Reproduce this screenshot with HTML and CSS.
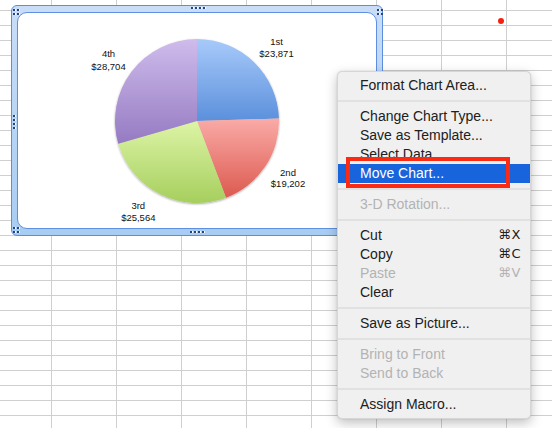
FILE: index.html
```html
<!DOCTYPE html>
<html>
<head>
<meta charset="utf-8">
<link rel="stylesheet" href="styles.css">
</head>
<body>
<div class="sheet">
  <div class="chart">
    <span class="handle corner h-tl"><i></i><i></i><i></i><i></i></span>
    <span class="handle corner h-tr"><i></i><i></i><i></i><i></i></span>
    <span class="handle corner h-bl"><i></i><i></i><i></i><i></i></span>
    <span class="handle row h-tm"><i></i><i></i><i></i><i></i></span>
    <span class="handle row h-bm"><i></i><i></i><i></i><i></i></span>
    <span class="handle col h-lm"><i></i><i></i><i></i><i></i></span>
    <div class="plot">
      <svg class="pie" viewBox="18 13 358 215" width="358" height="215">
        <defs>
          <linearGradient id="gBlue" x1="0" y1="0" x2="0" y2="1">
            <stop offset="0" stop-color="#a8cafa"/>
            <stop offset="1" stop-color="#5b90dc"/>
          </linearGradient>
          <linearGradient id="gRed" x1="0" y1="0" x2="0" y2="1">
            <stop offset="0" stop-color="#faaba7"/>
            <stop offset="1" stop-color="#dc5a50"/>
          </linearGradient>
          <linearGradient id="gGreen" x1="0" y1="0" x2="0" y2="1">
            <stop offset="0" stop-color="#ddf4a6"/>
            <stop offset="1" stop-color="#a6cf5e"/>
          </linearGradient>
          <linearGradient id="gPurple" x1="0" y1="0" x2="0" y2="1">
            <stop offset="0" stop-color="#cfbcec"/>
            <stop offset="1" stop-color="#957ac2"/>
          </linearGradient>
          <filter id="shadow" x="-10%" y="-10%" width="120%" height="120%">
            <feDropShadow dx="0" dy="1" stdDeviation="1" flood-color="#000" flood-opacity="0.35"/>
          </filter>
        </defs>
        <g filter="url(#shadow)">
          <path d="M197,121 L197,39 A82,82 0 0 1 278.96,118.54 Z" fill="url(#gBlue)"/>
          <path d="M197,121 L278.96,118.54 A82,82 0 0 1 226.0,197.7 Z" fill="url(#gRed)"/>
          <path d="M197,121 L226.0,197.7 A82,82 0 0 1 118.25,143.84 Z" fill="url(#gGreen)"/>
          <path d="M197,121 L118.25,143.84 A82,82 0 0 1 197,39 Z" fill="url(#gPurple)"/>
        </g>
        <g class="labels">
          <text x="108.5" y="57.3">4th</text>
          <text x="108.5" y="70">$28,704</text>
          <text x="276.5" y="45">1st</text>
          <text x="276.5" y="56.5">$23,871</text>
          <text x="288" y="175.6">2nd</text>
          <text x="288" y="187.2">$19,202</text>
          <text x="138.3" y="209.3">3rd</text>
          <text x="138.3" y="221">$25,564</text>
        </g>
      </svg>
    </div>
  </div>

  <span class="anchor-dot"></span>

  <div class="menu">
    <div class="item">Format Chart Area...</div>
    <div class="sep"></div>
    <div class="item">Change Chart Type...</div>
    <div class="item">Save as Template...</div>
    <div class="item">Select Data...</div>
    <div class="item active">Move Chart...</div>
    <div class="sep"></div>
    <div class="item disabled">3-D Rotation...</div>
    <div class="sep"></div>
    <div class="item"><span>Cut</span><span class="key">⌘X</span></div>
    <div class="item"><span>Copy</span><span class="key">⌘C</span></div>
    <div class="item disabled"><span>Paste</span><span class="key">⌘V</span></div>
    <div class="item">Clear</div>
    <div class="sep"></div>
    <div class="item">Save as Picture...</div>
    <div class="sep"></div>
    <div class="item disabled">Bring to Front</div>
    <div class="item disabled">Send to Back</div>
    <div class="sep"></div>
    <div class="item">Assign Macro...</div>
  </div>

  <div class="callout"></div>
</div>
</body>
</html>
```

FILE: styles.css
```css
html, body {
  margin: 0;
  padding: 0;
}

body {
  width: 552px;
  height: 428px;
  overflow: hidden;
  background: #fff;
  font-family: "Liberation Sans", Arial, sans-serif;
}

.sheet {
  position: relative;
  width: 552px;
  height: 428px;
  box-sizing: border-box;
  padding: 5px 0 0 11px;
  background-color: #fff;
  background-image:
    linear-gradient(to right, #cfcfcf 1px, transparent 1px),
    linear-gradient(to bottom, #cfcfcf 1px, transparent 1px);
  background-size: 65px 100%, 100% 15px;
  background-position: 51px 0, 0 10px;
}

/* chart object */
.chart {
  position: relative;
  width: 372px;
  height: 231px;
  box-sizing: border-box;
  border: 1px solid #5d8edd;
  border-radius: 6px;
  padding: 6px 5px;
  background: linear-gradient(to bottom, #c9ddf7, #b5d3f4 60%, #a8cdf2);
}

.plot {
  height: 100%;
  box-sizing: border-box;
  border: 1px solid #5f8fe0;
  border-radius: 10px;
  background: #fff;
  overflow: hidden;
}

.pie {
  display: block;
}

.labels text {
  font-family: "Liberation Sans", Arial, sans-serif;
  font-size: 9.5px;
  fill: #101010;
  text-anchor: middle;
}

.handle {
  position: absolute;
  display: grid;
  gap: 2px;
}

.handle i {
  display: block;
  width: 2px;
  height: 2px;
  background: #2a4278;
  box-shadow: 1px 0 0 #ffffff;
}

.handle.corner {
  grid-template-columns: 2px 2px;
}

.handle.row {
  grid-auto-flow: column;
}

.handle.col {
  grid-auto-flow: row;
}

.h-tl { left: 1px; top: 3px; }
.h-tr { left: 365px; top: 3px; }
.h-bl { left: 1px; top: 221px; }
.h-tm { left: 179px; top: 1px; }
.h-bm { left: 178px; top: 225px; }
.h-lm { left: 1px; top: 109px; }

/* red marker dot */
.anchor-dot {
  position: absolute;
  left: 498px;
  top: 18px;
  width: 6px;
  height: 6px;
  border-radius: 50%;
  background: #f5210f;
}

/* context menu */
.menu {
  position: absolute;
  left: 337px;
  top: 71px;
  width: 194px;
  box-sizing: border-box;
  padding: 4px 0;
  background: #f0f0f0;
  border: 1px solid #d6d6d6;
  border-radius: 5px;
  box-shadow: 0 4px 12px rgba(0, 0, 0, 0.25), 0 0 2px rgba(0, 0, 0, 0.12);
  font-family: "Liberation Sans", Arial, sans-serif;
  font-size: 14px;
  color: #202020;
}

.item {
  height: 19px;
  box-sizing: border-box;
  display: flex;
  align-items: center;
  justify-content: space-between;
  padding: 0 9px 2px 22px;
  white-space: nowrap;
}

.item.active {
  background: #1864dc;
  color: #fff;
}

.item.disabled {
  color: #b3b3b3;
}

.key {
  font-family: "DejaVu Sans", "Liberation Sans", sans-serif;
  font-size: 13px;
  letter-spacing: 0.5px;
}

.sep {
  height: 12px;
  display: flex;
  align-items: center;
}

.sep::before {
  content: "";
  flex: 1;
  height: 2px;
  background: #e1e1e1;
}

/* red highlight rectangle */
.callout {
  position: absolute;
  left: 346px;
  top: 157px;
  width: 164px;
  height: 31px;
  box-sizing: border-box;
  border: 4px solid #fb2a12;
}
```
